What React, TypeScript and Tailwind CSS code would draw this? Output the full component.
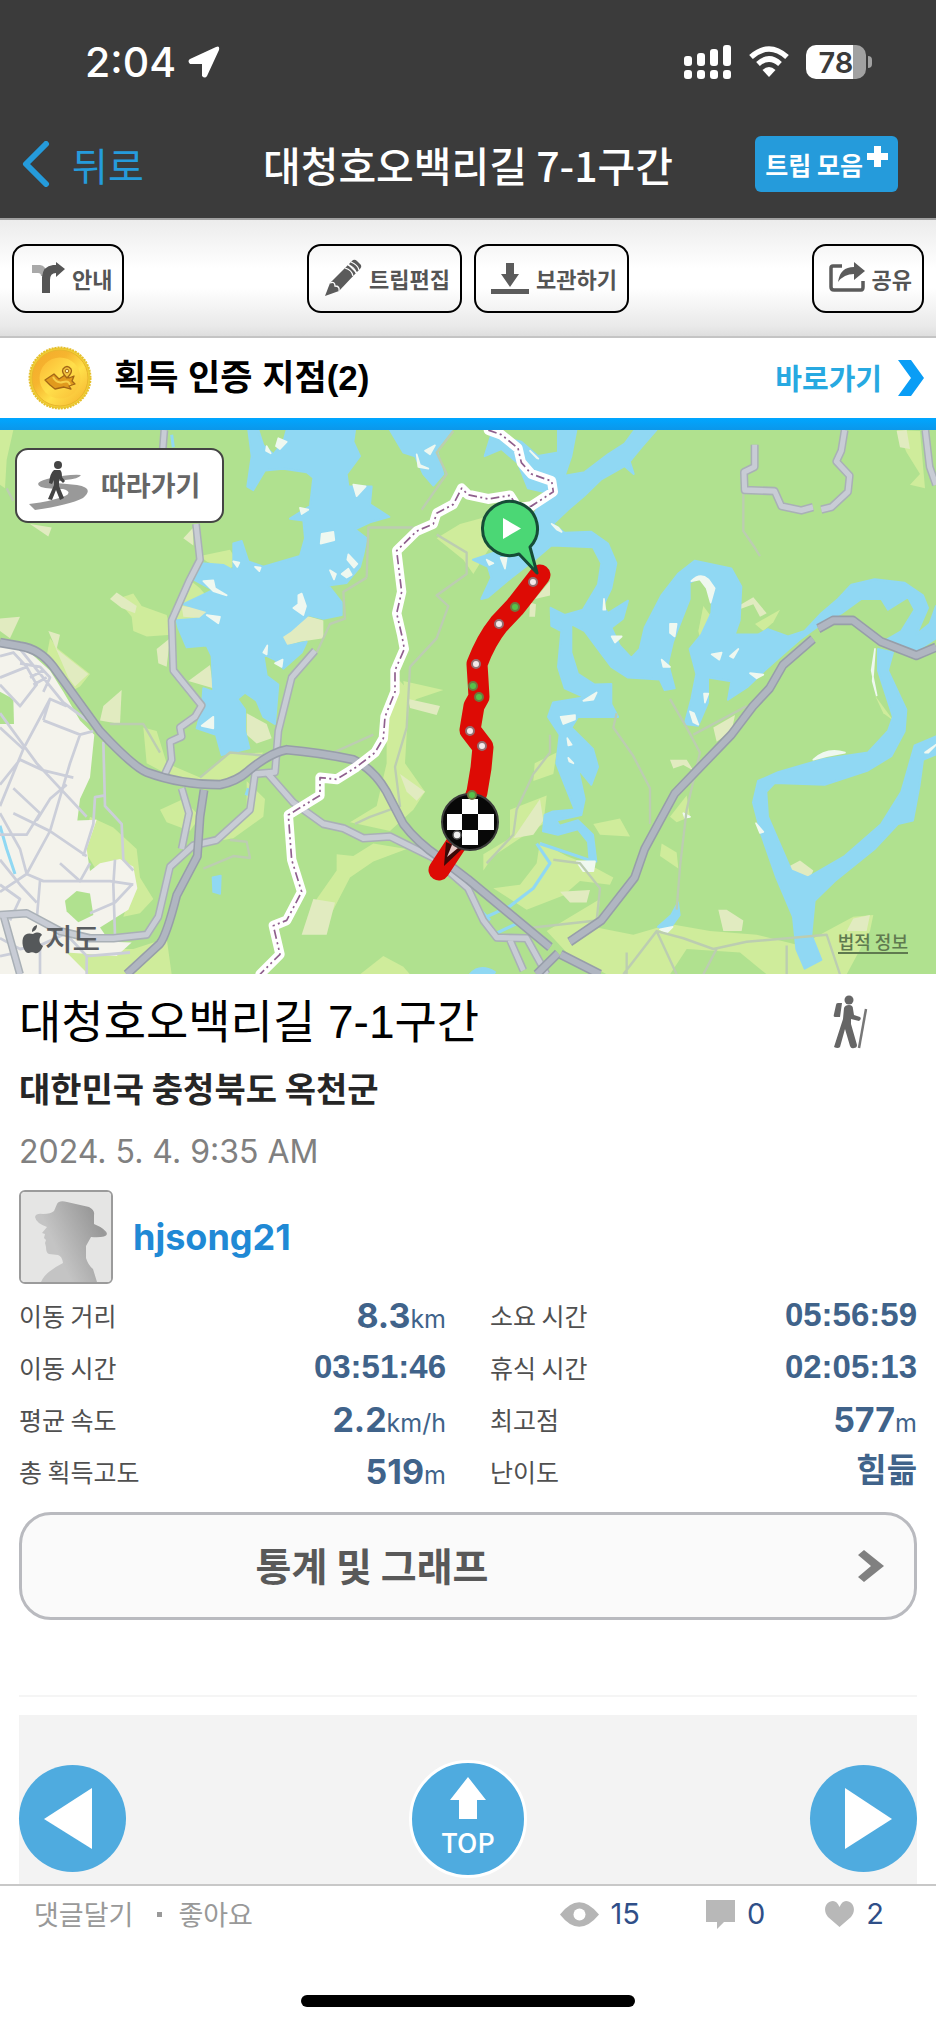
import type { ReactNode } from "react";

const KR = "font-['Noto_Sans_CJK_KR',sans-serif]";
const LATIN = "font-['Inter','Noto_Sans_CJK_KR',sans-serif]";

/* ---------- Map data (drawn on a 2808 x 1551 grid) ---------- */

const fields = [
  "M0 27H40L20 110 15 190 0 180Z",
  "M350 500L400 485 425 520 500 545 515 600 440 605 400 590 395 550Z",
  "M560 440L520 540 550 590 640 560 645 520 600 470Z",
  "M600 380L690 362 715 400 680 420 620 395Z",
  "M150 610L175 640 270 710 240 745 210 760 140 660Z",
  "M430 860L470 870 500 960 600 1000 680 935 790 930 740 980 680 1015 560 1020 440 960Z",
  "M480 1090L550 1060 600 1110 570 1150 500 1125Z",
  "M740 1010L795 1060 790 1110 700 1170 640 1180 740 1090Z",
  "M1190 720L1230 760 1220 880 1215 960 1275 1040 1240 1090 1170 1150 1050 1125 1130 1080 1160 960 1160 880Z",
  "M1210 730L1330 755 1250 780 1220 800Z",
  "M1010 1215L1060 1220 1120 1185 1220 1200 1120 1235 1050 1280 1000 1370 940 1430 950 1340 1010 1260Z",
  "M270 1110L340 1140 410 1200 420 1280 460 1340 420 1380 370 1390 400 1300 350 1240 290 1260 250 1200Z",
  "M150 1490L330 1480 400 1480 500 1450 515 1551H260L180 1540Z",
  "M1080 1551L1150 1500 1210 1530 1230 1551Z",
  "M1380 290L1460 270 1480 340 1420 430 1390 390 1310 330Z",
  "M1604 960L1670 930 1660 990 1600 1010Z",
  "M1530 1090L1640 1050 1630 1130 1560 1170 1480 1220 1450 1260 1450 1215 1530 1170Z",
  "M1620 1180L1700 1220 1780 1250 1840 1280 1830 1300 1740 1290 1690 1330 1580 1370 1480 1310 1560 1300 1610 1240Z",
  "M1780 1130L1860 1115 1890 1165 1800 1160Z",
  "M1640 1430L1800 1340 1790 1420 1900 1440 2010 1410 2130 1430 2270 1440 2400 1470 2500 1420 2560 1390 2620 1385 2610 1430 2540 1551H2300L2220 1490 2060 1480 2010 1551H1820L1700 1490Z",
  "M2010 1110L2060 1050 2070 1110 2030 1125Z",
  "M1985 1185L2030 1210 2035 1255 1980 1220Z",
  "M2110 520L2130 545 2100 610 2095 590Z",
  "M2265 570L2340 530 2320 565 2290 590Z",
  "M2690 27L2760 30 2775 190 2730 180 2760 150 2720 90Z",
  "M2625 770L2680 840 2650 820Z",
];

const sands = [
  "M330 500L350 482 410 520 405 540 365 525Z",
  "M0 555L60 550 30 610 0 590Z",
  "M145 590L180 600 170 640 265 710 225 745 205 720Z",
  "M545 520L630 530 615 555 550 550Z",
  "M565 730L630 685 640 750Z",
  "M845 605L910 545 970 560 970 610 900 620 860 632Z",
  "M740 820L800 850 815 890 770 905 740 880Z",
  "M310 800L365 755 360 850 300 840Z",
  "M470 640L510 610 500 690 475 680Z",
  "M1200 990L1275 1040 1250 1065 1220 1040Z",
  "M1225 780L1320 800 1310 825 1230 805Z",
  "M940 1340L1005 1350 980 1440 905 1440Z",
  "M90 290L155 300 145 325Z",
  "M550 330L580 300 580 350Z",
  "M2215 520L2260 495 2300 540 2280 550 2260 515 2215 530Z",
  "M2010 950L2060 950 2080 980 2050 965 2020 975Z",
  "M2140 860L2205 825 2195 870 2150 900Z",
  "M1590 510L1608 515 1605 550 1588 550Z",
  "M1605 500L1650 450 1650 490Z",
  "M1540 1170L1620 1060 1630 1120 1600 1160Z",
  "M1680 1320L1770 1315 1760 1350 1710 1350Z",
  "M2365 1250L2400 1232 2440 1260 2430 1280 2380 1278Z",
  "M2155 1370L2180 1370 2230 1400 2225 1430 2170 1430Z",
  "M2560 1395L2610 1385 2600 1430 2540 1430Z",
  "M2690 30L2720 27 2730 80 2700 75Z",
];

const city =
  "M0 630L90 650 150 700 190 760 240 840 283 880 270 1000 240 1060 232 1120 290 1118 260 1200 270 1262 300 1240 360 1228 400 1250 412 1310 385 1370 300 1420 330 1460 395 1462 350 1500 200 1490 265 1551H0Z";

const parks = [
  "M0 760L40 780 42 850 0 850Z",
  "M195 1345L230 1318 270 1325 280 1385 235 1405 200 1375Z",
];

const waters = [
  // western lake
  "M745 27H775L790 70 820 95 850 60 860 27H1065L1060 60 1080 100 1040 150 1045 185 1115 185 1110 235 1168 270 1110 285 1065 305 1100 330 1090 375 1080 410 1040 455 985 462 1025 510V545L970 555 925 545 870 590 845 605 860 632 920 620 905 650 850 695 825 670 790 655 800 715 835 740 825 850 790 830 770 785 735 762 712 780 735 810V870L748 918 665 937 648 880 590 862 605 810 610 750 640 760 635 660 620 630 560 635 535 580 530 560 600 555 625 535 550 515 640 475 580 445 605 400 670 405 700 420V345L725 338 745 395 790 410 900 380 915 330 910 280 870 275 930 240 940 160 920 145 850 135 795 140 760 195 742 185 755 100Z",
  "M1170 27H1355L1310 80 1330 150 1300 182 1270 150 1245 100 1210 90Z",
  // winding river through the middle
  "M1674 27H1729L1714 100 1694 155 1754 145 1824 95 1874 65 1904 27H1969L1924 75 1889 115 1901 150 1874 128 1804 165 1754 210 1704 250 1659 290 1694 315 1774 312 1824 345 1849 400 1834 470 1809 520 1824 540 1884 505 1869 555 1834 580 1859 630 1894 665 1919 640 1934 580 1984 490 2034 430 2084 393 2134 403 2194 415 2224 465 2219 560 2204 600 2274 600 2304 585 2364 605 2414 590 2464 540 2514 500 2554 460 2624 445 2714 455 2769 490 2784 525 2749 600 2789 570 2808 520V610L2749 645 2694 630 2659 615 2704 590 2744 530 2724 495 2664 530 2644 500 2584 500 2524 540 2464 570 2404 610 2354 650 2294 700 2244 745 2184 782 2194 730 2124 720V790L2094 855 2054 850 2074 780 2089 710 2069 640 2104 600 2134 540 2139 460 2104 435 2069 455V500L2044 560 2019 620 2004 680 2024 750 1994 755 1979 725 1884 720 1834 690 1794 640 1754 590 1714 570V650L1734 710 1784 740 1834 738V795L1854 830 1804 830 1734 830 1714 860 1779 920 1794 970 1774 1020 1734 975 1754 1060 1744 1105 1669 1120 1679 1135 1734 1120 1779 1160 1789 1235 1769 1235 1764 1180 1734 1145 1674 1160 1629 1150 1634 1105 1659 1095 1724 1090 1694 1020 1669 960 1679 880 1644 830 1659 790 1754 775 1694 750 1674 690 1684 590 1654 575 1652 525 1694 545 1749 530 1794 460 1804 400 1779 355 1654 350 1604 390 1534 440 1464 495 1444 500 1474 440 1464 410 1419 390 1484 370 1584 300 1634 200 1584 190 1554 120 1504 80 1454 100 1474 40 1564 60 1614 100 1674 90Z",
  // eastern loop
  "M2634 640L2679 650 2664 700 2719 810 2714 870 2674 940 2604 980 2474 1020 2324 1015 2299 1040 2304 1110 2374 1260 2424 1280 2534 1220 2644 1130 2704 1040 2744 910 2808 885V935L2769 950 2759 1020 2739 1120 2694 1130 2624 1200 2504 1290 2444 1345 2434 1440 2464 1510 2414 1535 2389 1480 2379 1390 2329 1280 2284 1160 2259 1070 2274 1010 2334 985 2464 950 2604 930 2664 870 2679 830 2634 700Z",
  "M2034 1350L2039 1385 2004 1430 1974 1418 2014 1385Z",
  "M638 1280L662 1275 660 1325 640 1320Z",
  "M1410 1551Q1440 1520 1485 1545L1480 1551Z",
];

const streams = [
  "M1610 1185L1650 1240 1600 1310 1530 1360 1460 1390M1620 1185L1700 1210 1780 1235M1470 1400L1440 1370M1480 1440L1570 1400",
  "M0 1135L20 1200 45 1270M515 40L520 75M745 1030L738 1050",
];

const shores = [
  "M835 50L860 60 840 80 828 72ZM800 72L812 92 798 85ZM962 345L965 318 1000 312 1003 335ZM1060 180L1097 185 1070 212ZM900 245L925 250 905 262ZM990 420L1008 430 1002 445ZM1045 375L1072 402 1062 412 1042 390ZM1025 430L1045 415 1055 432 1040 440ZM895 490L905 485 918 520 910 545 880 525 895 515ZM610 450L640 448 645 470 680 490 640 478ZM620 545L660 550 655 568ZM605 855L640 830 640 862ZM790 650L802 630 800 655ZM825 680L848 670 845 690ZM1250 95L1260 125 1285 135 1255 130ZM1275 85L1305 70 1290 95ZM700 395L718 398 712 410ZM765 410L782 412 778 422Z",
  "M2074 450Q2100 425 2125 445L2144 470 2132 510 2120 470 2100 445ZM2010 570L2030 570 2024 605 2010 595ZM2135 655L2165 650 2158 670ZM2190 660L2215 640 2200 665ZM2250 708L2290 712 2270 722ZM1835 605L1865 605 1845 622ZM1985 670L2010 690 1990 690ZM1750 785L1790 762 1780 782ZM1682 830L1725 825 1725 837 1690 850ZM2070 815L2082 820 2095 852 2080 845ZM2112 765L2125 765 2115 790ZM1812 500L1816 530 1810 530ZM1502 385L1520 385 1515 415ZM1460 390L1480 400 1468 405ZM1655 290L1675 300 1685 312 1670 305ZM1590 85L1615 107 1610 105Z",
  "M2440 950Q2480 915 2535 930L2480 940ZM2268 1128L2290 1152 2280 1155ZM1730 1235L1785 1235 1780 1262 1750 1262ZM1980 1425L2018 1418 2000 1435ZM2050 1100L2070 1110 2055 1112ZM2625 640L2615 700 2630 770 2618 730ZM2775 930L2808 908 2785 930ZM1702 890L1715 908 1705 910ZM1705 945L1720 960 1708 955Z",
];

const paths = [
  "M20 190L40 225M1360 30L1310 90 1340 150 1265 250M1100 440L1105 300 1240 300M1100 440L1030 480 1035 555 990 570 950 650M1310 320L1400 370 1400 430 1310 490 1345 520 1310 610 1230 690 1220 860 1185 970 1200 1080 1110 1110 1065 1130M330 850L430 850 480 930M600 1000L690 930 810 940M1000 930L1120 880M610 1255L700 1220 750 1225 740 1180 690 1175",
  "M1850 820L1840 860 1900 940 1950 1030 1950 1130M2010 780L2060 860 2100 930 2060 1090 2040 1250 2030 1370M2230 200L2230 310 2260 350 2280 380M2240 800L2080 880M1650 880V930L1600 990 1550 1090 1540 1160 1460 1240M1660 1230L1740 1240 1800 1310 1790 1400 1600 1420M1870 1551L1970 1430 2050 1450 2140 1480 2240 1460 2480 1440 2520 1551M1970 1430L2030 1551M2110 1551L2150 1480M2360 1470V1551M1880 1490V1551",
];

const streets = [
  "M0 660L40 650 80 690 0 720M80 690L110 740 60 800 0 740M60 640L190 790 290 860M150 780L70 920 0 1080M70 920L0 860M0 820L110 960 260 1110M130 840L240 880 210 960 150 1150M240 880L280 870M130 840L150 780 200 800M0 1020L60 950 130 980 220 1000M150 1150L260 1220M0 1160L80 1160 120 1100 40 1030M150 1150L80 1270 0 1320M80 1270L130 1290 270 1290 330 1290 400 1300M120 1290L110 1400M0 1230L60 1300 110 1350M40 1100L150 1150M0 1100L60 1200 80 1270M0 1300L60 1340 30 1400M345 1230L340 1300 345 1440M270 1380L345 1350 395 1300M60 680L120 690 150 720 130 760M90 720L130 700M100 740L140 720",
  "M310 900L315 1080 365 1130 370 1230 400 1260M315 1050L285 1055 280 1130 250 1220M0 1450L60 1480 120 1470 190 1440M120 1470L120 1551M200 1440L260 1500 260 1551M260 1500L390 1490M180 1240L240 1290 270 1240M0 1500L50 1490M200 1020L150 1060 110 1120",
];

const roads = [
  "M493 27L488 85M588 290L600 390 567 450 515 560 520 700 605 798 585 830 540 860 545 885 510 900 515 950 490 1000",
  "M945 645L875 720 835 870 825 985 765 990 750 1090 650 1175 580 1190 510 1250 475 1390 440 1440 340 1450 270 1450 180 1430 80 1380 0 1385M10 1385L60 1551",
  "M800 985L880 1070 970 1130 1030 1142 1090 1170 1170 1165 1300 1225 1404 1310 1450 1400 1490 1448 1580 1450 1640 1551M545 1030L567 1100 545 1200M1530 1455L1570 1540",
  "M2264 68V130L2232 145 2234 195 2324 198 2344 240 2404 252 2439 243M2464 250L2494 243 2544 200 2549 155 2509 115 2524 85 2534 27M2776 27L2789 130 2808 180",
];

const highways = [
  "M0 622L60 632Q120 640 160 690L300 870Q400 970 440 985 540 1020 660 1020 710 1010 740 985 810 930 860 922 960 930 1060 950 1120 975 1160 1040L1210 1130Q1250 1180 1320 1225L1404 1285 1650 1475M1682 1495L1800 1551",
  "M612 1035L600 1110 592 1220 530 1330Q500 1440 480 1465L380 1551",
  "M2439 612L2349 685 2309 750 2259 800 2194 880 2024 1045 1934 1200 1904 1280 1804 1400 1709 1460M2455 583L2499 560H2559L2644 620 2749 658 2808 635M1674 1492L1610 1551",
];

const border =
  "M1465 27L1504 40 1554 78 1564 118 1594 150 1655 170 1660 200 1594 240 1554 245 1530 210 1464 220 1404 208 1385 190 1360 235 1310 260 1300 290 1250 310 1190 365 1205 480 1190 540 1205 600 1213 640 1185 700V760L1155 830 1150 890 1125 930 1070 970 1010 1005 960 1000V1050L865 1105 875 1230 905 1320 860 1400 820 1415 840 1495 780 1551";

const whiteStops = [[533, 152], [499, 194], [476, 234], [470, 301], [482, 316]];
const greenStops = [[515, 177], [473, 256], [479, 267], [472, 365]];

const RouteMap = () => (
  <svg viewBox="0 0 936 544" className="block h-auto w-full" role="img" aria-label="대청호오백리길 지도">
    <rect width="936" height="544" fill="#b0e18f" />
    <g transform="translate(0 -9.6) scale(0.33333 0.35714)" fill="none" strokeLinejoin="round">
      {fields.map((d) => <path key={d} d={d} fill="#cfec9b" />)}
      {sands.map((d) => <path key={d} d={d} fill="#e1ebc0" />)}
      <path d={city} fill="#f4f3ec" />
      {parks.map((d) => <path key={d} d={d} fill="#b0e18f" />)}
      {waters.map((d) => <path key={d} d={d} fill="#90d8f3" stroke="#90d8f3" strokeWidth="6" />)}
      {streams.map((d) => <path key={d} d={d} stroke="#90d8f3" strokeWidth="9" />)}
      {shores.map((d) => <path key={d} d={d} fill="#eff8f0" stroke="#eff8f0" strokeWidth="5" />)}
      {paths.map((d) => <path key={d} d={d} stroke="#bccdb1" strokeWidth="7" />)}
      {streets.map((d) => <path key={d} d={d} stroke="#cbced9" strokeWidth="8" />)}
      {roads.map((d) => <path key={d} d={d} stroke="#a9b0b6" strokeWidth="24" />)}
      {roads.map((d) => <path key={d} d={d} stroke="#c8ccd5" strokeWidth="15" />)}
      {highways.map((d) => <path key={d} d={d} stroke="#979ea9" strokeWidth="27" />)}
      {highways.map((d) => <path key={d} d={d} stroke="#b0b6c1" strokeWidth="18" />)}
      <path d={border} stroke="#ffffff" strokeWidth="28" strokeLinecap="round" />
      <path d={border} stroke="#8f5f8d" strokeWidth="5" strokeDasharray="26 10 6 10 6 10" />
    </g>
    {/* Recorded track */}
    <path
      d="M540 145L515 177 499 194Q486 210 477 234L478 250 479 267 474 276 470 300 483 317 481 338 477 362 462 405 439 440"
      fill="none"
      stroke="#dd0b05"
      strokeWidth="21"
      strokeLinecap="round"
      strokeLinejoin="round"
    />
    {whiteStops.map(([x, y]) => (
      <circle key={`${x}-${y}`} cx={x} cy={y} r="4" fill="#f4e9e9" stroke="#937072" strokeWidth="2" />
    ))}
    {/* Finish flag */}
    <path d="M446 412L444 436 462 419Z" fill="#3a0a08" />
    <path d="M454 410L447 427 458 418Z" fill="#e8c9c7" />
    <circle cx="470" cy="392" r="28" fill="#080808" stroke="#3b3b3b" strokeWidth="2" />
    <path
      d="M462 369H478V384H462ZM447 384H462V400H447ZM478 384H494V400H478ZM462 400H478V415H462Z"
      fill="#fff"
    />
    <circle cx="457" cy="405" r="4" fill="#eee" stroke="#555" strokeWidth="1.5" />
    {greenStops.map(([x, y]) => (
      <circle key={`${x}-${y}`} cx={x} cy={y} r="4" fill="#55c24a" stroke="#6c7a3e" strokeWidth="2" />
    ))}
    {/* Start balloon */}
    <path
      d="M519 124A27.500 27 0 1 1 530 117L537 143Z"
      fill="#4bd775"
      stroke="#164c37"
      strokeWidth="3"
      strokeLinejoin="round"
    />
    <path d="M503 88V109L521 98.500Z" fill="#fff" />
    {/* Map provider mark */}
    <path
      d="M33 504C38 501 41 503 42 505 38 508 39 514 43 516 41 521 38 524 35 523 33 522 31 522 29 523 25 524 21 515 23 508 25 503 29 503 33 504ZM32 502C32 498 34 496 37 495 37 499 35 501 32 502Z"
      fill="#55585a"
    />
  </svg>
);

/* ---------- Icons ---------- */

const TurnIcon = () => (
  <svg viewBox="0 0 36 36" className="size-9" aria-hidden="true">
    <path d="M3 5H11Q17 6 17 12V16H12Q12 13 9 13H3Z" fill="#a9a9a9" />
    <path d="M13 33V17Q14 6 24 5H27V2L36 9 27 17V13Q21 13 21 20V33Z" fill="#555" />
  </svg>
);

const PencilIcon = () => (
  <svg viewBox="0 0 38 38" className="size-[38px]" aria-hidden="true">
    <path d="M1 37L6 24 24 6 32 14 15 32Z" fill="#5b5b5b" />
    <path d="M25 5L29 1Q31 0 33 2L37 6Q38 8 36 10L33 13Z" fill="#5b5b5b" />
    <path d="M6 24Q11 22 11 27 16 27 15 32M21 9Q28 11 29 17M24 6Q31 8 32 14M27 3Q34 6 35 11" fill="none" stroke="#fff" strokeWidth="1.300" />
  </svg>
);

const SaveIcon = () => (
  <svg viewBox="0 0 38 36" className="h-9 w-[38px]" aria-hidden="true">
    <path d="M15 3H23V14H28L19 27 10 14H15ZM0 29H38V34H0Z" fill="#5b5b5b" />
  </svg>
);

const ShareIcon = () => (
  <svg viewBox="0 0 36 36" className="size-9" aria-hidden="true">
    <path d="M13 6H4Q2 6 2 8V27Q2 30 5 30H32Q34 30 34 27V21" fill="none" stroke="#5b5b5b" strokeWidth="3.500" />
    <path d="M9 22Q11 7 25 7V2L36 11 25 20V14Q15 14 9 22Z" fill="#5b5b5b" />
  </svg>
);

const FollowIcon = () => (
  <svg viewBox="0 0 60 50" className="h-[50px] w-[60px] shrink-0" aria-hidden="true">
    <path
      d="M52 14Q40 13 18 18 4 22 12 26 20 28 34 28 44 31 36 35 24 40 0 43L6 49Q40 44 54 37 66 27 48 24 38 23 27 22 24 21 36 19 50 18 52 14Z"
      fill="#999"
    />
    <circle cx="29" cy="4" r="4" fill="#444" />
    <path d="M25 9H31Q33 10 33 16L36 20 34 22 30 18 30 25 35 37 31 39 27 29 23 39 19 38 25 24V19L23 23 20 22Q21 12 25 9Z" fill="#444" />
  </svg>
);

const HikerIcon = () => (
  <svg viewBox="0 0 36 54" className="h-[54px] w-9" aria-hidden="true">
    <g fill="#666">
      <circle cx="16" cy="5" r="4.500" />
      <path d="M5 8L9 8 7 22H2Q0 22 1 19L3 10Q3 8 5 8Z" />
      <path d="M11 13Q12 10 16 10T20 14L21 20 27 22Q29 24 26 26L18 24 18 29 24 50Q24 53 21 53 18 54 17 51L12 34 7 52Q5 54 1 52L10 24Z" />
    </g>
    <path d="M33 14L26 53" stroke="#777" strokeWidth="2.500" />
  </svg>
);

const Coin = () => (
  <svg viewBox="0 0 64 64" className="size-16" aria-hidden="true">
    <defs>
      <linearGradient id="rim" x1="0" y1="0" x2="1" y2="1">
        <stop offset="0" stopColor="#f4a92b" />
        <stop offset="0.350" stopColor="#f6b52f" />
        <stop offset="0.600" stopColor="#ffe04a" />
        <stop offset="1" stopColor="#f4ae2d" />
      </linearGradient>
      <linearGradient id="face" x1="0" y1="0" x2="1" y2="1">
        <stop offset="0" stopColor="#fbb632" />
        <stop offset="0.500" stopColor="#ffdf4b" />
        <stop offset="1" stopColor="#f9bd36" />
      </linearGradient>
    </defs>
    <circle cx="32" cy="32" r="30.500" fill="#f0cd35" stroke="#e5bf2c" strokeWidth="2" strokeDasharray="2 1" />
    <circle cx="32" cy="32" r="28" fill="url(#rim)" stroke="#e9b52d" />
    <circle cx="32" cy="32" r="20.500" fill="url(#face)" />
    <path
      d="M17 34L26 28 31 33 37 29 41 32 46 30 44 35 47 38 41 40 43 43 36 41 27 43 22 39Z"
      fill="#e19a1d"
      stroke="#a36616"
      strokeWidth="1.300"
      strokeLinejoin="round"
    />
    <path d="M25 31Q29 38 35 36T42 39" fill="none" stroke="#f7d04a" strokeWidth="2" />
    <path d="M39 32Q33 26 35 23 39 18 43 23 45 26 39 32Z" fill="#f5c63f" stroke="#a36616" strokeWidth="1.300" />
    <circle cx="39" cy="25" r="1.800" fill="#fff0ae" stroke="#a36616" />
  </svg>
);

const Avatar = () => (
  <svg viewBox="0 0 90 90" className="size-full" aria-hidden="true">
    <defs>
      <linearGradient id="hat" x1="0" y1="0.500" x2="1" y2="0">
        <stop offset="0.200" stopColor="#c4c4c4" />
        <stop offset="0.800" stopColor="#989898" />
        <stop offset="1" stopColor="#b5b5b5" />
      </linearGradient>
    </defs>
    <rect width="90" height="90" fill="#e5e5e4" />
    <path
      d="M14 25Q15 21 22 22 30 22 33 19L36 12Q38 8 46 10L68 15Q74 18 73 23L73 32Q85 37 86 42 85 46 70 45L65 54V66Q67 73 72 77L76 90H20Q24 80 42 71 41 64 37 63L28 62Q25 61 25 55L24 51 25 48 23 46 24 42 21 41 26 35Q15 31 14 25Z"
      fill="url(#hat)"
    />
  </svg>
);

const StatusIcons = () => (
  <div className="flex items-center gap-4 text-white">
    <svg viewBox="0 0 48 34" className="h-[34px] w-12" fill="currentColor" aria-hidden="true">
      <rect x="0" y="11" width="8" height="10" rx="3" />
      <rect x="13" y="8" width="8" height="13" rx="3" />
      <rect x="26" y="4" width="8" height="17" rx="3" />
      <rect x="39" y="0" width="8" height="21" rx="3" />
      <rect x="0" y="25" width="8" height="9" rx="3" />
      <rect x="13" y="25" width="8" height="9" rx="3" />
      <rect x="26" y="25" width="8" height="9" rx="3" />
      <rect x="39" y="25" width="8" height="9" rx="3" />
    </svg>
    <svg viewBox="0 0 42 32" className="h-8 w-[42px]" aria-hidden="true">
      <g fill="none" stroke="currentColor" strokeWidth="5.500">
        <path d="M3 11Q21 -5 39 11" />
        <path d="M10 18Q21 8 32 18" />
      </g>
      <path d="M14.500 24Q21 18 27.500 24L21 31Z" fill="currentColor" />
    </svg>
    <div className="flex items-center gap-0.5">
      <div className={`flex h-[34px] w-[60px] items-center justify-center rounded-[10px] bg-[linear-gradient(90deg,#fff_79%,#a1a1a1_79%)] text-[29px] leading-none font-semibold text-[#3b3b3b] ${LATIN}`}>
        78
      </div>
      <div className="h-3 w-1 rounded-r-full bg-[#a1a1a1]" />
    </div>
  </div>
);

/* ---------- Building blocks ---------- */

interface ToolButtonProps {
  icon: ReactNode;
  label: string;
}

const ToolButton = ({ icon, label }: ToolButtonProps) => (
  <button
    type="button"
    className="flex h-[69px] items-center gap-[7px] rounded-[14px] border-2 border-black pr-[10px] pl-[15px] text-[22px] font-bold text-[#555]"
  >
    {icon}
    {label}
  </button>
);

interface Stat {
  label: string;
  value: string;
  unit?: string;
}

const stats: Stat[] = [
  { label: "이동 거리", value: "8.3", unit: "km" },
  { label: "소요 시간", value: "05:56:59" },
  { label: "이동 시간", value: "03:51:46" },
  { label: "휴식 시간", value: "02:05:13" },
  { label: "평균 속도", value: "2.2", unit: "km/h" },
  { label: "최고점", value: "577", unit: "m" },
  { label: "총 획득고도", value: "519", unit: "m" },
  { label: "난이도", value: "힘듦" },
];

const StatRow = ({ label, value, unit }: Stat) => (
  <div className="flex h-[52px] items-center justify-between">
    <dt className="text-[25px] text-[#505050]">{label}</dt>
    <dd className="pb-0.5 text-[#40638a]">
      {unit ? (
        <span className={LATIN}>
          <span className="text-[34px] font-bold">{value}</span>
          <span className="text-[25px]">{unit}</span>
        </span>
      ) : (
        <span className="font-['Liberation_Sans','Noto_Sans_CJK_KR',sans-serif] text-[33px] font-bold">{value}</span>
      )}
    </dd>
  </div>
);

interface CounterProps {
  icon: ReactNode;
  count: number;
  label: string;
}

const Counter = ({ icon, count, label }: CounterProps) => (
  <span className={`flex items-center gap-3 text-[29px] text-[#2f4f88] ${LATIN}`} aria-label={label}>
    {icon}
    {count}
  </span>
);

export default function App() {
  return (
    <div className={`flex min-h-screen flex-col bg-white ${KR}`}>
      <header className="border-b-2 border-[#a0a0a0] bg-[#3b3b3b]">
        <div className="flex h-28 items-center justify-between pt-3 pr-16 pl-[85px]">
          <div className={`flex items-center gap-3 text-[41px] leading-none font-medium text-white ${LATIN}`}>
            2:04
            <svg viewBox="0 0 32 32" className="size-8" fill="currentColor" aria-hidden="true">
              <path d="M2 13L28 1Q32 -1 31 4L19 30Q17 33 14 30V18H2Q-1 15 2 13Z" />
            </svg>
          </div>
          <StatusIcons />
        </div>

        <nav className="grid h-[106px] grid-cols-[1fr_auto_1fr] items-center px-[22px] pb-0.5">
          <a href="#back" className="flex items-center gap-[22px] text-[39px] leading-none text-[#259bdb]">
            <svg viewBox="0 0 28 46" className="h-[46px] w-7" aria-hidden="true">
              <path d="M24 3L4 23 24 43" fill="none" stroke="currentColor" strokeWidth="6" strokeLinecap="round" strokeLinejoin="round" />
            </svg>
            뒤로
          </a>
          <h1 className="text-[41px] leading-none font-medium text-white">대청호오백리길 7-1구간</h1>
          <button
            type="button"
            className="mr-4 flex h-14 items-center gap-1 justify-self-end rounded-md bg-[#259bdb] px-[10px] text-[25px] leading-none font-bold text-white"
          >
            트립 모음
            <svg viewBox="0 0 21 42" className="h-[42px] w-[21px]" fill="currentColor" aria-hidden="true">
              <path d="M7 3H14V10H21V17H14V24H7V17H0V10H7Z" />
            </svg>
          </button>
        </nav>
      </header>

      <div className="flex h-[118px] items-center justify-between border-b-2 border-[#c4c4c4] bg-[linear-gradient(#ececec,#fff_42%,#fff_58%,#e9e9e9_92%,#dedede)] px-3">
        <ToolButton icon={<TurnIcon />} label="안내" />
        <div className="flex gap-3">
          <ToolButton icon={<PencilIcon />} label="트립편집" />
          <ToolButton icon={<SaveIcon />} label="보관하기" />
        </div>
        <ToolButton icon={<ShareIcon />} label="공유" />
      </div>

      <section className="flex h-20 items-center justify-between pr-3 pl-7">
        <div className="flex items-center gap-[22px]">
          <Coin />
          <h2 className="font-['Liberation_Sans','Noto_Sans_CJK_KR',sans-serif] text-[35px] font-bold text-black">획득 인증 지점(2)</h2>
        </div>
        <a href="#certified" className="flex items-center gap-4 text-[29px] font-bold text-[#27a9e1]">
          바로가기
          <svg viewBox="0 0 26 36" className="h-9 w-[26px]" aria-hidden="true">
            <path d="M0 0H13L26 18 13 36H0L13 18Z" fill="#0a9df5" />
          </svg>
        </a>
      </section>
      <div className="h-3 bg-gradient-to-b from-[#00a6ff] to-[#0b97ea]" />

      <section className="relative">
        <RouteMap />
        <button
          type="button"
          className="absolute top-[18px] left-[15px] flex h-[75px] w-[209px] items-center gap-3 rounded-[13px] border-2 border-[#444] bg-white pl-3 text-[27px] font-bold text-[#666]"
        >
          <FollowIcon />
          따라가기
        </button>
        <span className="absolute bottom-4 left-[45px] text-[30px] leading-[42px] font-medium text-[#5a5d60]">지도</span>
        <a href="#legal" className="absolute right-7 bottom-5 border-b-2 border-[#5f7a4f] text-[18px] leading-[22px] font-medium text-[#5f7a4f]">
          법적 정보
        </a>
      </section>

      <main className="px-[19px] pt-4">
        <div className="flex h-16 items-center justify-between pr-12">
          <h2 className="font-['Liberation_Sans','Noto_Sans_CJK_KR',sans-serif] text-[46px] leading-none text-black">대청호오백리길 7-1구간</h2>
          <HikerIcon />
        </div>
        <p className="mt-1 text-[34px] leading-[60px] font-bold text-[#262626]">대한민국 충청북도 옥천군</p>
        <p className={`mt-1 text-[32px] leading-[60px] text-[#808080] ${LATIN}`}>2024. 5. 4. 9:35 AM</p>
        <div className="mt-2 flex items-center gap-5">
          <div className="size-[94px] overflow-hidden rounded-md border-2 border-[#9b9b9b]">
            <Avatar />
          </div>
          <a href="#hjsong21" className={`text-[36px] leading-none font-bold text-[#2089d5] ${LATIN}`}>hjsong21</a>
        </div>

        <dl className="mt-1.5 grid grid-cols-2 gap-x-11">
          {stats.map((stat) => (
            <StatRow key={stat.label} {...stat} />
          ))}
        </dl>

        <button
          type="button"
          className="mt-3.5 flex h-[108px] w-full items-center rounded-[32px] border-3 border-[#b9babf] bg-[#fafafa] pr-[30px] text-[39px] font-bold text-[#595959]"
        >
          <span className="flex-1 pr-[136px] pb-1 text-center">통계 및 그래프</span>
          <svg viewBox="0 0 26 32" className="h-8 w-[26px]" aria-hidden="true">
            <path d="M0 5L6 0 26 16 6 32 0 27 13 16Z" fill="#808080" />
          </svg>
        </button>

        <hr className="mt-[75px] border-t-2 border-[#f5f5f5]" />
        <div className="mt-[18px] flex h-[169px] items-center justify-between bg-[#f3f3f3] pt-[38px]">
          <button type="button" aria-label="이전" className="size-[107px] rounded-full bg-[#4fabdf]">
            <svg viewBox="0 0 107 107" aria-hidden="true">
              <path d="M25 54L73 23V84Z" fill="#fff" />
            </svg>
          </button>
          <button
            type="button"
            className="flex size-[118px] flex-col items-center justify-center gap-2 rounded-full border-3 border-white bg-[#4fabdf] pb-1 text-[27px] leading-[30px] font-medium text-white"
          >
            <svg viewBox="0 0 36 42" className="h-[42px] w-9" aria-hidden="true">
              <path d="M18 0L36 23H27V42H9V23H0Z" fill="#fff" />
            </svg>
            TOP
          </button>
          <button type="button" aria-label="다음" className="size-[107px] rounded-full bg-[#4fabdf]">
            <svg viewBox="0 0 107 107" aria-hidden="true">
              <path d="M82 54L35 23V84Z" fill="#fff" />
            </svg>
          </button>
        </div>
      </main>

      <footer className="flex flex-1 flex-col justify-between border-t-2 border-[#c8c8c8]">
        <div className="flex h-14 items-center justify-between pr-[52px] pl-[34px]">
          <div className="flex items-center text-[27px] text-[#999]">
            <button type="button">댓글달기</button>
            <span className="mr-4 ml-6 size-[5px] bg-[#999]" />
            <button type="button">좋아요</button>
          </div>
          <div className="flex items-center">
            <Counter
              label="조회 15"
              count={15}
              icon={
                <svg viewBox="0 0 39 25" className="h-[25px] w-[39px]" aria-hidden="true">
                  <path d="M0 12.500Q19 -12 39 12.500 19 37 0 12.500Z" fill="#b5b5b5" />
                  <circle cx="19.500" cy="12.500" r="6" fill="#fff" />
                </svg>
              }
            />
            <span className="w-[66px]" />
            <Counter
              label="댓글 0"
              count={0}
              icon={
                <svg viewBox="0 0 29 29" className="size-[29px]" aria-hidden="true">
                  <path d="M0 0H29V22H18L11 29V22H0Z" fill="#b8b8b8" />
                </svg>
              }
            />
            <span className="w-[60px]" />
            <Counter
              label="좋아요 2"
              count={2}
              icon={
                <svg viewBox="0 0 29 26" className="h-[26px] w-[29px]" aria-hidden="true">
                  <path d="M14.500 26L3 16C-3 9 1 0 8 0Q12 0 14.500 6 17 0 21 0C28 0 32 9 26 16Z" fill="#b8b8b8" />
                </svg>
              }
            />
          </div>
        </div>
        <div className="mx-auto mb-[19px] h-3 w-[334px] rounded-full bg-black" />
      </footer>
    </div>
  );
}
